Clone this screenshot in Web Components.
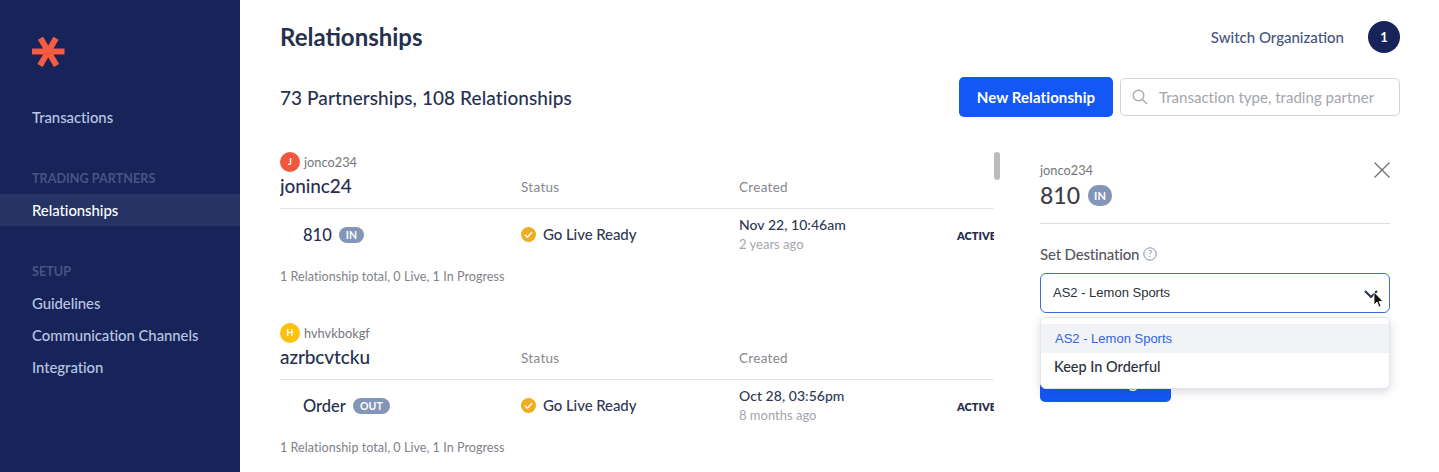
<!doctype html>
<html><head><meta charset="utf-8">
<style>
html,body{margin:0;padding:0;height:472px;overflow:hidden;background:#fff}
body{font-family:Lato,"Noto Sans",sans-serif;color:#26304f}
app-shell{height:472px}
</style></head>
<body>
<app-shell>
  <app-sidebar slot="side">
    <nav-item>Transactions</nav-item>
    <nav-label>TRADING PARTNERS</nav-label>
    <nav-item active>Relationships</nav-item>
    <nav-label>SETUP</nav-label>
    <nav-item>Guidelines</nav-item>
    <nav-item>Communication Channels</nav-item>
    <nav-item>Integration</nav-item>
  </app-sidebar>
  <page-header></page-header>
  <partner-list slot="list">
    <partner-card org="jonco234" initial="J" color="#f1573f" name="joninc24" type="810" dir="IN" date="Nov 22, 10:46am" ago="2 years ago"></partner-card>
    <partner-card org="hvhvkbokgf" initial="H" color="#fcc10e" name="azrbcvtcku" type="Order" dir="OUT" date="Oct 28, 03:56pm" ago="8 months ago"></partner-card>
  </partner-list>
  <side-panel slot="panel"></side-panel>
</app-shell>
<script>
const def=(name,html)=>{customElements.define(name,class extends HTMLElement{
  connectedCallback(){ if(this.shadowRoot)return; const s=this.attachShadow({mode:'open'});
    s.innerHTML=typeof html==='function'?html(this):html; }
});};

def('tag-badge',`<style>:host{display:inline-flex;align-items:center;justify-content:center;height:16px;padding:0 7px;border-radius:9px;background:#8496b7;color:#fff;font:700 10.5px Lato,sans-serif;letter-spacing:.2px}</style><slot></slot>`);

def('app-shell',`<style>
:host{display:flex;width:1439px;overflow:hidden}
.side{flex:none;width:240px}
main{flex:1;min-width:0;padding:0 39px 0 40px;display:flex;flex-direction:column;height:472px;box-sizing:border-box}
.body{display:flex;flex:1;min-height:0;margin-top:25px}
</style>
<div class="side"><slot name="side"></slot></div>
<main><slot></slot><div class="body"><slot name="list"></slot><slot name="panel"></slot></div></main>`);

def('app-sidebar',`<style>
:host{display:block;height:472px;background:#16245a;box-sizing:border-box;padding-top:37px}
svg{display:block;margin-left:32px}
.items{margin-top:34px}
</style>
<svg width="33" height="30" viewBox="0 0 33 30"><g stroke="#f55c41" stroke-width="6"><path d="M0 14.5H32.5"/><path d="M8.5 1.2L24.5 28.5"/><path d="M24 1.2L8 28.5"/></g></svg>
<div class="items"><slot></slot></div>`);

def('nav-item',h=>`<style>
:host{display:flex;align-items:center;height:32px;padding-left:32px;font:500 14.9px/30px Lato,sans-serif;letter-spacing:-.05px;color:${h.hasAttribute('active')?'#fff':'#bcc6e2'};background:${h.hasAttribute('active')?'#263365':'transparent'}}
</style><slot></slot>`);

def('nav-label',`<style>
:host{display:block;height:16px;padding-left:32px;font:700 12.6px/18px Lato,sans-serif;letter-spacing:.03px;color:#475584;margin:37px 0 8px}
</style><slot></slot>`);

def('page-header',`<style>
:host{display:block}
.top{display:flex;align-items:center;height:32px;margin-top:21px}
h1{margin:0 0 2px;font:700 24px Lato,sans-serif;color:#26304f;flex:1}
.sw{font:500 15px Lato,sans-serif;color:#46557f;margin-right:24px}
.av{width:32px;height:32px;border-radius:50%;background:#16245a;color:#fff;display:flex;align-items:center;justify-content:center;font:700 13px Lato,sans-serif}
.row{display:flex;align-items:center;height:40px;margin-top:24px}
.count{flex:1;font:500 19px/22px Lato,sans-serif;letter-spacing:.08px;color:#26304f;padding-top:1px}
.btn{width:154px;height:40px;border-radius:5px;background:#1358f5;color:#fff;font:700 15px/40px Lato,sans-serif;letter-spacing:.1px;text-align:center}
.search{width:280px;height:38px;box-sizing:border-box;border:1px solid #cfd3da;border-radius:5px;margin-left:7px;display:flex;align-items:center;padding-left:11px;font:400 15px Lato,sans-serif;letter-spacing:.02px;color:#a3a6ac}
.search svg{margin-right:11px}
</style>
<div class="top"><h1>Relationships</h1><span class="sw">Switch Organization</span><span class="av">1</span></div>
<div class="row"><span class="count">73 Partnerships, 108 Relationships</span><span class="btn">New Relationship</span>
<span class="search"><svg width="16" height="16" viewBox="0 0 16 16" fill="none" stroke="#a9acb2" stroke-width="1.4"><circle cx="6.5" cy="6.500" r="5.3"/><path d="M10.4 10.4L15 15"/></svg>Transaction type, trading partner</span></div>`);

def('partner-list',`<style>
:host{display:block;position:relative;width:720px;flex:none;height:100%}
.clip{width:714px;overflow:hidden;height:100%;padding-top:10px;box-sizing:border-box}
.thumb{position:absolute;right:0;top:10px;width:6px;height:28px;border-radius:3px;background:#b9bbbf}
</style><div class="clip"><slot></slot></div><div class="thumb"></div>`);

def('partner-card',h=>{const a=n=>h.getAttribute(n);return `<style>
:host{display:block;width:760px;height:171px}
.org{display:flex;align-items:center;height:20px;font:400 12.8px Lato,sans-serif;color:#74777d}
.dot{width:20px;height:20px;border-radius:50%;background:${a('color')};color:#fff;font:700 9px/20px Lato,sans-serif;text-align:center;margin-right:4px}
.grid{display:grid;grid-template-columns:241px 218px 218px 1fr;}
.head{height:36px;align-items:center;width:714px;border-bottom:1px solid #e3e5e8;box-sizing:content-box}
.name{font:500 19px/24px Lato,sans-serif;letter-spacing:-.1px;color:#26304f;margin-bottom:9px}
.h{font:400 13.5px/18px Lato,sans-serif;letter-spacing:.3px;color:#85888e;margin-bottom:6px}
.row{height:52px;align-items:center}
.t{display:flex;align-items:center;padding-left:23px;font:500 16.5px Lato,sans-serif;color:#26304f;gap:7px}
.s{display:flex;align-items:center;font:500 15px/18px Lato,sans-serif;letter-spacing:-.08px;color:#2f3955;gap:7px;margin-bottom:2px}
.d{font:500 14px/19px Lato,sans-serif;letter-spacing:.04px;color:#2f3955}
.a{font:400 13px/19px Lato,sans-serif;color:#a3a6ac;margin-top:1px}
.act{font:800 11px Lato,sans-serif;color:#26304f}
.foot{margin-top:6px;font:400 12.6px/20px Lato,sans-serif;letter-spacing:.03px;color:#7f8288}
</style>
<div class="org"><span class="dot">${a('initial')}</span>${a('org')}</div>
<div class="grid head"><div class="name">${a('name')}</div><div class="h">Status</div><div class="h">Created</div><div></div></div>
<div class="grid row"><div class="t">${a('type')} <tag-badge>${a('dir')}</tag-badge></div>
<div class="s"><svg width="15" height="15" viewBox="0 0 15 15"><circle cx="7.5" cy="7.5" r="7.5" fill="#efad22"/><path d="M4 7.8L6.4 10.2L11 5.3" fill="none" stroke="#fff" stroke-width="1.5"/></svg>Go Live Ready</div>
<div style="margin-bottom:1px"><div class="d">${a('date')}</div><div class="a">${a('ago')}</div></div>
<div class="act">ACTIVE</div></div>
<div class="foot">1 Relationship total, 0 Live, 1 In Progress</div>`});

def('side-panel',`<style>
:host{display:block;position:relative;width:350px;flex:none;margin-left:40px;height:100%}
.org{margin-top:20px;font:400 12.8px/16px Lato,sans-serif;color:#74777d}
.title{display:flex;align-items:center;gap:8px;height:30px;margin-top:2px;font:500 23px Lato,sans-serif;color:#3d4046}
.title tag-badge{height:21px;padding:0 6px;border-radius:10px;font-size:11px}
.x{position:absolute;right:0;top:20px}
hr{margin:13px 0 0;border:0;border-top:1px solid #dcdee1}
.lab{display:flex;align-items:center;gap:4px;margin-top:20px;height:20px;font:500 15px Lato,sans-serif;letter-spacing:-.17px;color:#55585e}
.sel{margin-top:9px;height:40px;box-sizing:border-box;border:1px solid #3a6fd8;border-radius:6px;display:flex;align-items:center;padding:0 0 2px 12px;font:400 13px "Liberation Sans",Arial,sans-serif;color:#2b2f3a}
.chev{position:absolute;right:12px;top:148px}
.save{margin-top:49px;width:131px;height:40px;border-radius:5px;background:#1358f5;color:#fff;font:700 15px/40px Lato,sans-serif;text-align:center}
.menu{position:absolute;left:0;right:0;top:175px;height:72px;box-sizing:border-box;padding:6px 0;background:#fff;border:1px solid #e4e6e9;border-radius:6px;box-shadow:0 3px 10px rgba(40,50,80,.18)}
.o{height:29px;display:flex;align-items:center;padding-left:14px;box-sizing:border-box}
.o1{background:#f2f3f6;color:#2f66de;font:400 13px "Liberation Sans",Arial,sans-serif}
.o2{padding:0 0 2px 13px;font:500 14.5px Lato,sans-serif;color:#2b2f3a}
.cur{position:absolute;left:333px;top:149px}
</style>
<div class="org">jonco234</div>
<div class="title">810 <tag-badge>IN</tag-badge></div>
<svg class="x" width="16" height="16" viewBox="0 0 16 16" stroke="#6f7276" stroke-width="1.4" fill="none"><path d="M.5.5L15.5 15.5M15.5.5L.5 15.5"/></svg>
<hr>
<div class="lab">Set Destination <svg width="14" height="14" viewBox="0 0 14 14"><circle cx="7" cy="7" r="6.2" fill="none" stroke="#7d8ea9" stroke-width="1"/><text x="7" y="10.3" font-size="9" font-family="Lato,sans-serif" text-anchor="middle" fill="#7d8ea9">?</text></svg></div>
<div class="sel">AS2 - Lemon Sports</div>
<svg class="chev" width="14" height="8" viewBox="0 0 14 8" fill="none" stroke="#26304f" stroke-width="2"><path d="M1 1L7 7L13 1"/></svg>
<div class="save">Save Changes</div>
<div class="menu"><div class="o o1">AS2 - Lemon Sports</div><div class="o o2">Keep In Orderful</div></div>
<svg class="cur" width="11" height="17" viewBox="0 0 11 17"><path d="M1 1V14L4 11L6 16L8 15L6 10.500L10 10.500Z" fill="#111" stroke="#fff" stroke-width=".8"/></svg>`);
</script>
</body></html>
